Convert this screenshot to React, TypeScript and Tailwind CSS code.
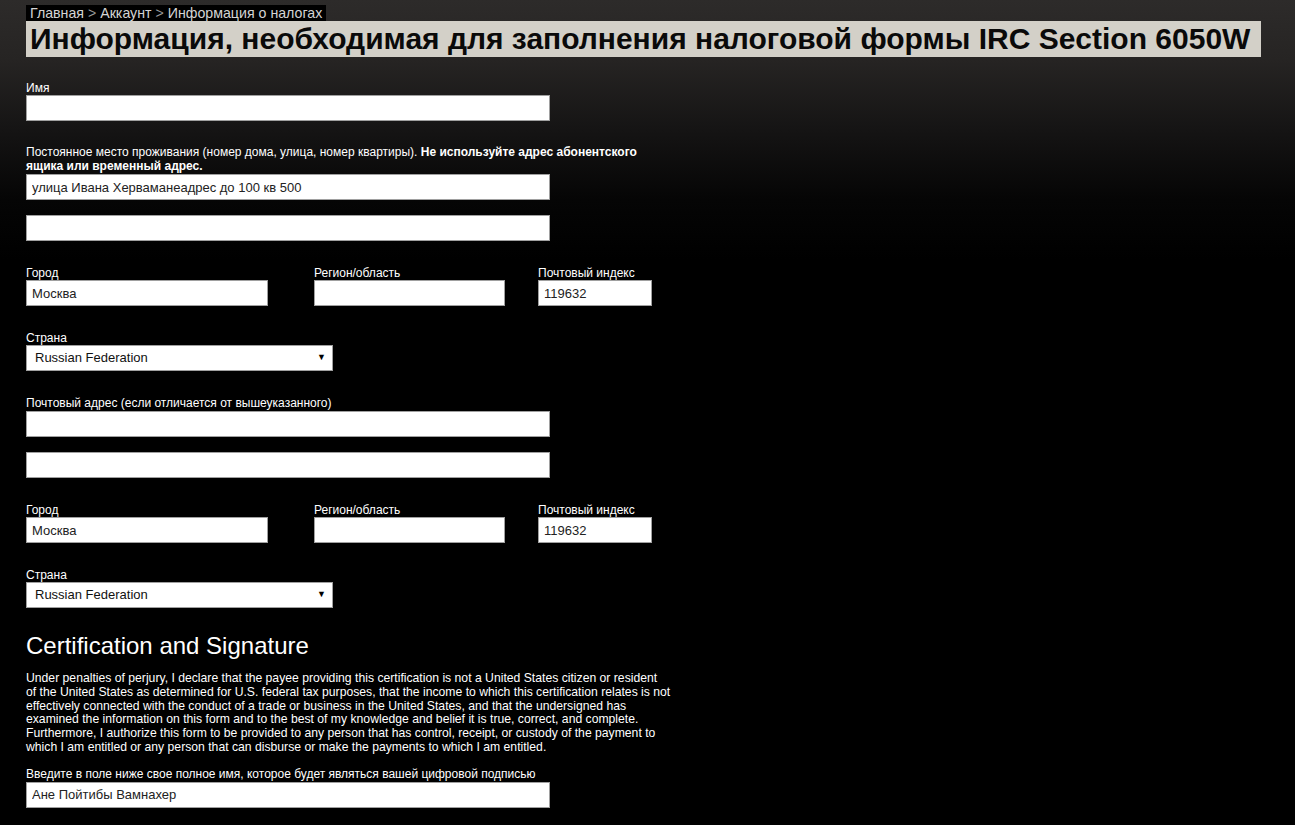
import React from "react";

const Label = ({ children }: { children: React.ReactNode }) => (
  <div className="text-[12px] leading-[14px] text-white">{children}</div>
);

const TextInput = ({ value = "", w = "w-[524px]" }: { value?: string; w?: string }) => (
  <input
    readOnly
    value={value}
    className={`block ${w} h-[26px] bg-white border border-[#a0a0a0] px-[5px] text-[13px] text-[#222] outline-none font-['Liberation_Sans',Arial,sans-serif]`}
  />
);

const SelectBox = () => (
  <div className="flex items-center justify-between w-[307px] h-[26px] bg-white border border-[#a0a0a0] pl-[8px] pr-[6px] text-[13px] text-[#111]">
    <span>Russian Federation</span>
    <span className="text-[9px] text-black">▼</span>
  </div>
);

const CityRow = () => (
  <div className="flex mt-[25px]">
    <div className="w-[288px]">
      <Label>Город</Label>
      <TextInput value="Москва" w="w-[242px]" />
    </div>
    <div className="w-[224px]">
      <Label>Регион/область</Label>
      <TextInput w="w-[191px]" />
    </div>
    <div>
      <Label>Почтовый индекс</Label>
      <TextInput value="119632" w="w-[114px]" />
    </div>
  </div>
);

const Country = () => (
  <div className="mt-[25px]">
    <Label>Страна</Label>
    <SelectBox />
  </div>
);

export default function App() {
  return (
    <div className="min-h-screen w-full bg-[linear-gradient(to_bottom,#2d2b2a_0px,#262423_60px,#151414_130px,#050505_200px,#000_260px)] font-['Liberation_Sans',Arial,sans-serif] pb-[20px]">
      <div className="pl-[26px] pt-[5px]">
        <div className="w-fit bg-black px-[4px] text-[14.2px] leading-[16px] text-[#d4d4d4]">
          Главная <span className="text-[#9a9a9a]">&gt;</span> Аккаунт{" "}
          <span className="text-[#9a9a9a]">&gt;</span> Информация о налогах
        </div>
        <div className="w-[1235px] h-[36px] bg-[#d3d0c8] px-[4px] text-[30px] leading-[36px] font-bold text-[#0a0a0a] whitespace-nowrap">
          Информация, необходимая для заполнения налоговой формы IRC Section 6050W
        </div>

        <div className="w-[645px]">
          <div className="mt-[24px]">
            <Label>Имя</Label>
            <TextInput />
          </div>

          <div className="mt-[24px]">
            <Label>
              Постоянное место проживания (номер дома, улица, номер квартиры).{" "}
              <b>Не используйте адрес абонентского ящика или временный адрес.</b>
            </Label>
            <div className="mt-[1px]">
              <TextInput value="улица Ивана Херваманеадрес до 100 кв 500" />
            </div>
            <div className="mt-[15px]">
              <TextInput />
            </div>
          </div>

          <CityRow />
          <Country />

          <div className="mt-[25px]">
            <Label>Почтовый адрес (если отличается от вышеуказанного)</Label>
            <div className="mt-[1px]">
              <TextInput />
            </div>
            <div className="mt-[15px]">
              <TextInput />
            </div>
          </div>

          <CityRow />
          <Country />

          <h2 className="mt-[24px] text-[24px] leading-[28px] text-white font-normal">
            Certification and Signature
          </h2>
          <p className="mt-[12px] w-[665px] text-[12.2px] leading-[13.8px] text-white whitespace-nowrap">
            Under penalties of perjury, I declare that the payee providing this certification is not a United States
            citizen or resident
            <br />
            of the United States as determined for U.S. federal tax purposes, that the income to which this
            certification relates is not
            <br />
            effectively connected with the conduct of a trade or business in the United States, and that the
            undersigned has
            <br />
            examined the information on this form and to the best of my knowledge and belief it is true, correct, and
            complete.
            <br />
            Furthermore, I authorize this form to be provided to any person that has control, receipt, or custody of
            the payment to
            <br />
            which I am entitled or any person that can disburse or make the payments to which I am entitled.
          </p>

          <div className="mt-[12px]">
            <Label>Введите в поле ниже свое полное имя, которое будет являться вашей цифровой подписью</Label>
            <div className="mt-[1px]">
              <TextInput value="Ане Пойтибы Вамнахер" />
            </div>
          </div>
        </div>
      </div>
    </div>
  );
}
